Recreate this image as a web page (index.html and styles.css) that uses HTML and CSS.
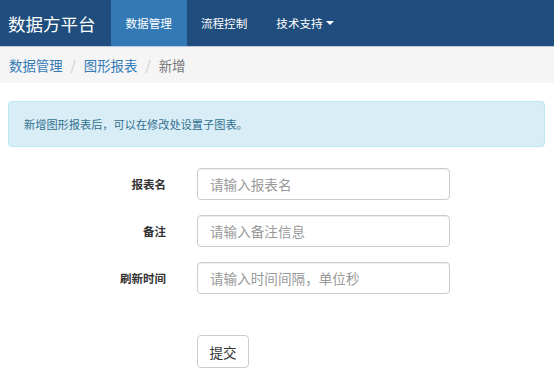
FILE: index.html
```html
<!DOCTYPE html>
<html lang="zh">
<head>
<meta charset="utf-8">
<title>数据方平台</title>
<link rel="stylesheet" href="styles.css">
</head>
<body>
<nav class="navbar">
  <a class="brand">数据方平台</a>
  <ul class="nav">
    <li class="nav-item active">数据管理</li>
    <li class="nav-item">流程控制</li>
    <li class="nav-item">技术支持<span class="caret"></span></li>
  </ul>
</nav>
<div class="breadcrumb">
  <a class="crumb-link">数据管理</a><span class="sep">/</span><a class="crumb-link">图形报表</a><span class="sep">/</span><span class="crumb-active">新增</span>
</div>
<main class="page">
  <div class="alert">新增图形报表后，可以在修改处设置子图表。</div>
  <form class="form">
    <label class="label">报表名</label>
    <input class="input" type="text" placeholder="请输入报表名">
    <label class="label">备注</label>
    <input class="input" type="text" placeholder="请输入备注信息">
    <label class="label">刷新时间</label>
    <input class="input" type="text" placeholder="请输入时间间隔，单位秒">
    <button class="btn" type="button">提交</button>
  </form>
</main>
</body>
</html>
```
FILE: styles.css
```css
* { box-sizing: border-box; }
html, body { margin: 0; padding: 0; background: #fff; }
body {
  font-family: "Noto Sans CJK SC", "Liberation Sans", sans-serif;
  color: #333;
  font-size: 14px;
}
.navbar {
  height: 46px;
  background: #1f4e7e;
  display: flex;
  align-items: stretch;
  box-shadow: 0 1px 0 #b9c8d8;
}
.brand {
  display: flex;
  align-items: center;
  padding: 0 15px 0 8px;
  font-size: 17.5px;
  color: #fff;
}
.nav {
  list-style: none;
  margin: 0;
  padding: 0;
  display: flex;
}
.nav-item {
  display: flex;
  align-items: center;
  padding: 0 15px 0 14px;
  font-size: 11.6px;
  color: #fff;
}
.nav-item.active {
  background: #3379b6;
  padding: 0 15px;
}
.caret {
  display: inline-block;
  width: 0;
  height: 0;
  margin-left: 3px;
  border-top: 4px solid #fff;
  border-left: 4px solid transparent;
  border-right: 4px solid transparent;
}
.breadcrumb {
  margin-top: 1px;
  height: 36px;
  background: #f5f5f5;
  display: flex;
  align-items: center;
  padding: 0 9px;
  font-size: 13.4px;
}
.crumb-link { color: #337ab7; }
.crumb-active { color: #777; }
.sep { color: #ccc; padding: 0 8px; }
.page {
  padding: 18px 9px 0 8px;
}
.alert {
  height: 46px;
  display: flex;
  align-items: center;
  padding: 0 15px;
  background: #d9edf7;
  border: 1px solid #bce8f1;
  border-radius: 4px;
  color: #31708f;
  font-size: 11.2px;
}
.form {
  margin-top: 21px;
  display: grid;
  grid-template-columns: 158px 253px;
  column-gap: 31px;
  row-gap: 15px;
}
.label {
  text-align: right;
  font-weight: bold;
  font-size: 11.5px;
  padding-top: 8px;
  line-height: 16px;
  color: #333;
}
.input {
  height: 32px;
  border: 1px solid #ccc;
  border-radius: 4px;
  padding: 0 12px;
  font-family: inherit;
  font-size: 13.6px;
  color: #555;
  box-shadow: inset 0 1px 1px rgba(0,0,0,0.075);
  outline: none;
}
.input::placeholder { color: #999; }
.btn {
  grid-column: 2;
  justify-self: start;
  margin-top: 26px;
  width: 52px;
  height: 33px;
  border: 1px solid #ccc;
  border-radius: 4px;
  background: #fff;
  font-family: inherit;
  font-size: 13.6px;
  color: #333;
  padding: 0;
}
```
